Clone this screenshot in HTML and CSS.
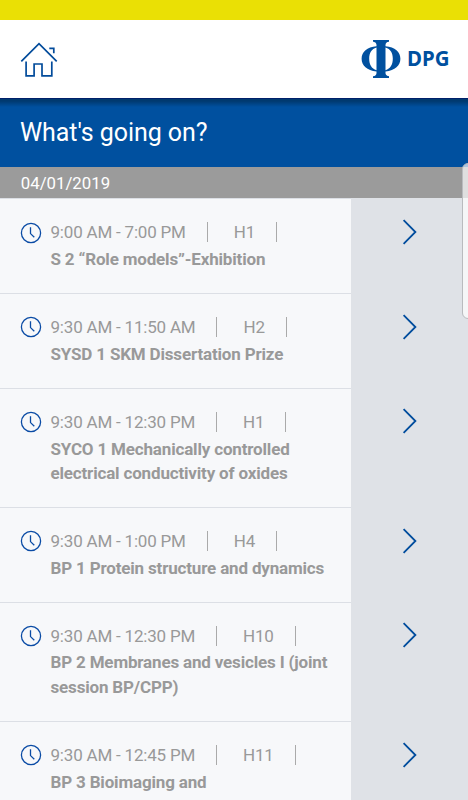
FILE: index.html
```html
<!DOCTYPE html>
<html lang="en">
<head>
<meta charset="utf-8">
<title>What's going on?</title>
<link rel="stylesheet" href="styles.css">
</head>
<body>
<svg class="defs" width="0" height="0">
  <symbol id="clock" viewBox="0 0 22 22"><circle cx="11" cy="11" r="9.6"/><path d="M10.5 5.3V11.6L14.3 15.3"/></symbol>
  <symbol id="chevron" viewBox="0 0 16 26"><path d="M1.6 1.2L13.4 13L1.6 24.8"/></symbol>
</svg>
<div class="status"></div>
<header class="header">
  <svg class="home" viewBox="0 0 38 36"><path d="M1.3 19.3L19 1.7L36.7 19.3M29.3 6.3H33.8V11.2M6.1 19.5V33.8H14.1V22H22V33.8H31.8V19.5"/></svg>
  <div class="brand">
    <svg class="phi" viewBox="0 0 40 38"><path fill-rule="evenodd" d="M12 0H28V1.8Q24.5 2 24.5 5V6.3C34 7 39.4 12.2 39.4 18.8S34 30.7 24.5 31.4V33C24.5 36 28 36.2 28 36.2V38H12V36.2Q15.5 36 15.5 33V31.4C6 30.7.6 25.4.6 18.8S6 7 15.5 6.3V5C15.5 2 12 1.8 12 1.8ZM15.5 7.5C10.5 9 8.2 13 8.2 18.8S10.5 28.7 15.5 30.2ZM24.5 7.5V30.2C29.5 28.7 31.8 24.6 31.8 18.8S29.5 9 24.5 7.5Z"/></svg>
    <span class="brand-name">DPG</span>
  </div>
</header>
<h1 class="title">What's going on?</h1>
<div class="date">04/01/2019</div>
<main class="list">
  <article class="row">
    <div class="info"><svg class="clock"><use href="#clock"/></svg><div class="meta"><span>9:00 AM - 7:00 PM</span><span class="room">H1</span></div><h2>S 2 “Role models”-Exhibition</h2></div>
    <div class="go"><svg class="chevron"><use href="#chevron"/></svg></div>
  </article>
  <article class="row">
    <div class="info"><svg class="clock"><use href="#clock"/></svg><div class="meta"><span>9:30 AM - 11:50 AM</span><span class="room">H2</span></div><h2>SYSD 1 SKM Dissertation Prize</h2></div>
    <div class="go"><svg class="chevron"><use href="#chevron"/></svg></div>
  </article>
  <article class="row">
    <div class="info"><svg class="clock"><use href="#clock"/></svg><div class="meta"><span>9:30 AM - 12:30 PM</span><span class="room">H1</span></div><h2>SYCO 1 Mechanically controlled electrical conductivity of oxides</h2></div>
    <div class="go"><svg class="chevron"><use href="#chevron"/></svg></div>
  </article>
  <article class="row">
    <div class="info"><svg class="clock"><use href="#clock"/></svg><div class="meta"><span>9:30 AM - 1:00 PM</span><span class="room">H4</span></div><h2>BP 1 Protein structure and dynamics</h2></div>
    <div class="go"><svg class="chevron"><use href="#chevron"/></svg></div>
  </article>
  <article class="row">
    <div class="info"><svg class="clock"><use href="#clock"/></svg><div class="meta"><span>9:30 AM - 12:30 PM</span><span class="room">H10</span></div><h2>BP 2 Membranes and vesicles I (joint session BP/CPP)</h2></div>
    <div class="go"><svg class="chevron"><use href="#chevron"/></svg></div>
  </article>
  <article class="row">
    <div class="info"><svg class="clock"><use href="#clock"/></svg><div class="meta"><span>9:30 AM - 12:45 PM</span><span class="room">H11</span></div><h2>BP 3 Bioimaging and<br>biospectroscopy I</h2></div>
    <div class="go"><svg class="chevron"><use href="#chevron"/></svg></div>
  </article>
</main>
<div class="edge-handle"></div>
</body>
</html>
```
FILE: styles.css
```css
* { box-sizing: border-box; }
body {
  margin: 0;
  height: 800px;
  overflow: hidden;
  position: relative;
  display: flex;
  flex-direction: column;
  background: #dfe2e7;
  font-family: Roboto, "Liberation Sans", sans-serif;
}
.defs { position: absolute; }
.status { flex: none; height: 20px; background: #eae005; }
.header {
  flex: none;
  height: 78px;
  display: flex;
  justify-content: space-between;
  align-items: flex-start;
  padding: 20px 19px 0 20px;
  background: #fff;
}
.home { width: 38px; height: 36px; margin-top: 2px; fill: none; stroke: #024b9b; stroke-width: 1.7; }
.brand { display: flex; color: #00509f; }
.phi { width: 40px; height: 38px; fill: currentColor; }
.brand-name {
  width: 42px;
  margin-left: 6.3px;
  font: 700 21.5px/36px "Noto Sans", sans-serif;
  transform: scaleX(.95);
  transform-origin: left;
}
.title {
  flex: none;
  height: 69px;
  margin: 0;
  padding-left: 20px;
  background: linear-gradient(#00206a 0, #00206a 1px, #00396f 1px, #00396f 3px, #00509f 9px);
  color: #fff;
  font-size: 25px;
  font-weight: 400;
  letter-spacing: -.07px;
  line-height: 69px;
}
.date {
  flex: none;
  height: 31.3px;
  padding-left: 20.8px;
  background: #9b9b9b;
  color: #fff;
  font-size: 16.8px;
  line-height: 33px;
}
.list { flex: none; }
.row { display: flex; }
.info {
  width: 351px;
  display: grid;
  grid-template-columns: 30.5px 1fr;
  align-content: start;
  padding: 22px 18px 21.2px 20px;
  border-top: 1.4px solid #dcdfe5;
  background: #f7f8fa;
  color: #999;
}
.clock { width: 22px; height: 22px; margin-top: .3px; fill: none; stroke: #0a4ba5; stroke-width: 1.3; }
.meta { height: 25.9px; display: flex; align-items: flex-start; font-size: 17px; letter-spacing: -.2px; }
.meta span { margin-top: 1.1px; padding-right: 21px; border-right: 1.4px solid #aaa; line-height: 20px; }
.meta .room { padding-left: 26px; }
h2 { grid-column: 2; margin: 0; font-size: 17px; font-weight: 700; letter-spacing: -.17px; line-height: 24.6px; }
.go { flex: 1; padding: 20.8px 0 0 50.5px; }
.chevron { width: 16px; height: 26px; fill: none; stroke: #004c9d; stroke-width: 1.8; }
.edge-handle {
  position: absolute;
  top: 163px;
  right: -8px;
  width: 14px;
  height: 156px;
  border: 1px solid #b9bbbe;
  border-radius: 6px;
  background: rgba(255, 255, 255, .68);
}
```
